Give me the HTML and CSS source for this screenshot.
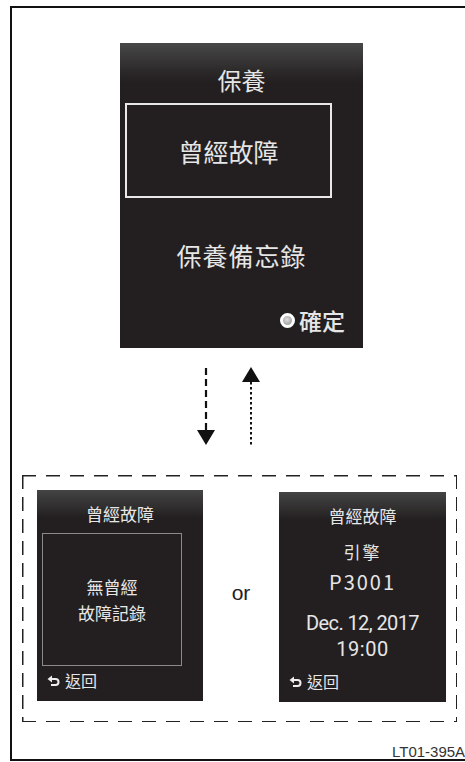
FILE: index.html
```html
<!DOCTYPE html>
<html lang="zh-Hant">
<head>
    <meta charset="UTF-8">
    <meta name="viewport" content="width=device-width, initial-scale=1.0">
    <title>保養 - 曾經故障</title>
    <link rel="stylesheet" href="styles.css">
</head>
<body>
    <div class="frame">
        <div class="screen main">
            <div class="main-title">保養</div>
            <div class="selected">曾經故障</div>
            <div class="main-item">保養備忘錄</div>
            <div class="confirm"><span class="knob"></span>確定</div>
        </div>

        <svg class="arrows" width="70" height="82" viewBox="0 0 70 82">
            <line x1="11" y1="3" x2="11" y2="66" stroke="#111" stroke-width="2.2" stroke-dasharray="7 4"/>
            <polygon points="2,65 20,65 11,80" fill="#111"/>
            <line x1="56" y1="17" x2="56" y2="81" stroke="#111" stroke-width="2" stroke-dasharray="2.5 2.5"/>
            <polygon points="47,17 65,17 56,2" fill="#111"/>
        </svg>

        <div class="choices">
            <div class="screen small">
                <div class="small-title">曾經故障</div>
                <div class="empty-box">
                    <span>無曾經</span>
                    <span>故障記錄</span>
                </div>
                <div class="back">
                    <svg width="13" height="11" viewBox="0 0 13 11"><path d="M5 0.5 L0.5 4 L5 7.5 Z" fill="#eee"/><path d="M4 4 H8.5 a3 3 0 0 1 0 6 H4" fill="none" stroke="#eee" stroke-width="2"/></svg>
                    返回
                </div>
            </div>

            <div class="or">or</div>

            <div class="screen small detail">
                <div class="small-title">曾經故障</div>
                <div class="part">引擎</div>
                <div class="code">P3001</div>
                <div class="date">Dec. 12, 2017</div>
                <div class="time">19:00</div>
                <div class="back">
                    <svg width="13" height="11" viewBox="0 0 13 11"><path d="M5 0.5 L0.5 4 L5 7.5 Z" fill="#eee"/><path d="M4 4 H8.5 a3 3 0 0 1 0 6 H4" fill="none" stroke="#eee" stroke-width="2"/></svg>
                    返回
                </div>
            </div>
        </div>

        <div class="label">LT01-395A</div>
    </div>
</body>
</html>
```

FILE: styles.css
```css
html, body {
    overflow: hidden;
}
body {
    margin: 0;
    background-color: #fff;
    font-family: "Noto Sans CJK TC", "Noto Sans", sans-serif;
}
.frame {
    margin: 6px 0 0 10px;
    width: 460px;
    height: 751px;
    border: 2px solid #111;
    border-right: none;
    overflow: hidden;
}
.screen {
    background: linear-gradient(#484848 0, #2a2727 30px, #231f20 40px);
    color: #e6e6e6;
    box-sizing: border-box;
}
.main {
    margin: 35px 0 0 108px;
    width: 243px;
    height: 305px;
    display: flex;
    flex-direction: column;
}
.main-title {
    padding-top: 22px;
    height: 38px;
    line-height: 30px;
    text-align: center;
    font-size: 24px;
}
.selected {
    margin-left: 5px;
    width: 207px;
    height: 95px;
    box-sizing: border-box;
    border: 2px solid #e8e8e8;
    display: flex;
    align-items: center;
    justify-content: center;
    font-size: 25px;
}
.main-item {
    margin-top: 37px;
    line-height: 40px;
    text-align: center;
    font-size: 25px;
    letter-spacing: 1px;
}
.confirm {
    margin-top: 25px;
    line-height: 40px;
    padding-right: 18px;
    display: flex;
    align-items: center;
    justify-content: flex-end;
    font-size: 23px;
    font-weight: 500;
}
.knob {
    width: 9px;
    height: 9px;
    margin-right: 4px;
    border: 3px solid #fff;
    border-radius: 50%;
    background: radial-gradient(circle at 45% 40%, #e0e0e0, #8a8a8a);
}
.arrows {
    display: block;
    margin: 17px 0 0 183px;
}
.choices {
    margin: 28px 0 0 10px;
    width: 435px;
    height: 247px;
    box-sizing: border-box;
    padding: 15px 0 0 15px;
    display: flex;
    align-items: flex-start;
    background:
        repeating-linear-gradient(90deg, #222 0 14px, transparent 14px 24px) left top / 100% 1.5px no-repeat,
        repeating-linear-gradient(90deg, #222 0 14px, transparent 14px 24px) left bottom / 100% 1.5px no-repeat,
        repeating-linear-gradient(180deg, #222 0 14px, transparent 14px 22px) left top / 1.5px 100% no-repeat,
        repeating-linear-gradient(180deg, #222 0 14px, transparent 14px 22px) right top / 1.5px 100% no-repeat;
}
.small {
    width: 166px;
    height: 211px;
    background: linear-gradient(#444 0, #2a2727 22px, #231f20 28px);
    display: flex;
    flex-direction: column;
}
.small-title {
    padding-top: 10px;
    line-height: 28px;
    text-align: center;
    font-size: 17px;
}
.empty-box {
    margin: 5px 0 0 5px;
    width: 140px;
    height: 133px;
    box-sizing: border-box;
    border: 1px solid #8a8a8a;
    display: flex;
    flex-direction: column;
    align-items: center;
    justify-content: center;
    line-height: 26px;
    font-size: 17px;
}
.back {
    display: flex;
    align-items: center;
    gap: 5px;
    margin-top: 2px;
    padding-left: 10px;
    line-height: 24px;
    font-size: 16px;
}
.or {
    width: 76px;
    height: 211px;
    line-height: 206px;
    text-align: center;
    font-family: "Liberation Sans", Arial, sans-serif;
    font-size: 21px;
    color: #222;
}
.detail {
    margin-top: 2px;
    width: 167px;
    height: 210px;
    text-align: center;
}
.part {
    margin-top: 8px;
    line-height: 28px;
    font-size: 17px;
    letter-spacing: 2px;
}
.code {
    margin-top: 1px;
    line-height: 30px;
    font-size: 20px;
    letter-spacing: 2px;
}
.date, .time {
    font-family: Roboto, "Noto Sans", sans-serif;
    line-height: 26px;
    font-size: 20px;
    letter-spacing: -0.6px;
}
.date {
    margin-top: 13px;
}
.time {
    letter-spacing: 0.5px;
}
.detail .back {
    margin-top: 7px;
}
.label {
    margin: 22px 0 0 380px;
    line-height: 16px;
    font-family: "Liberation Sans", Arial, sans-serif;
    font-size: 15px;
    color: #333;
    white-space: nowrap;
}
```
